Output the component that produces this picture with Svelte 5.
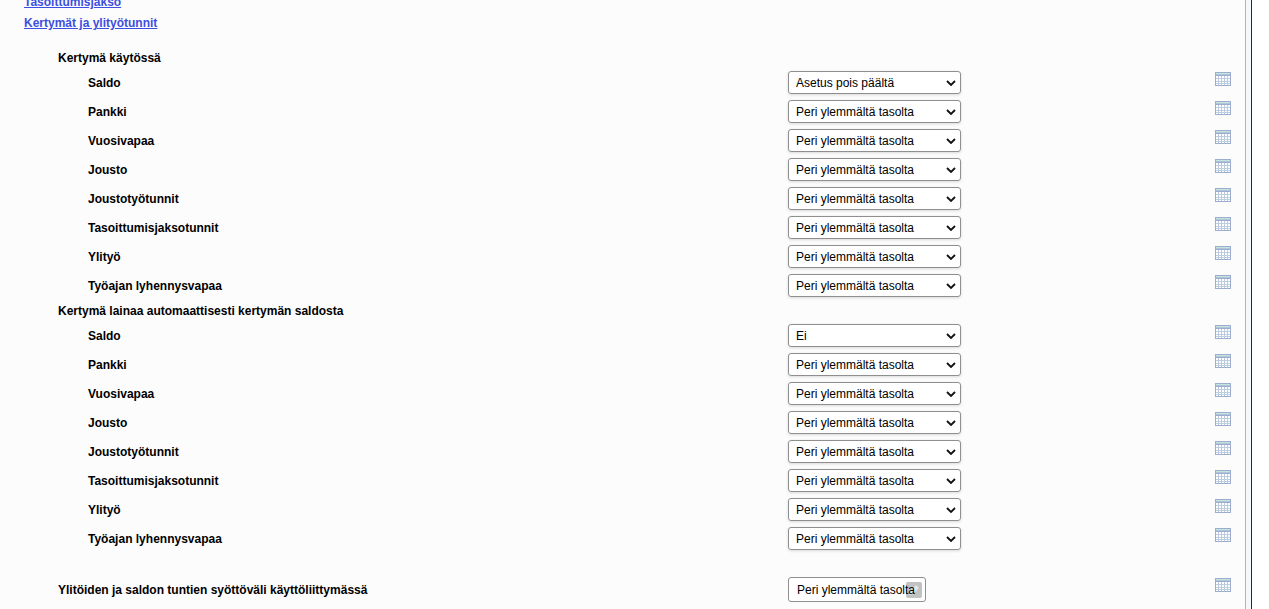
<script>
  const inherit = "Peri ylemmältä tasolta";
  const options = [inherit, "Asetus pois päältä", "Ei", "Kyllä"];
  const names = [
    "Saldo",
    "Pankki",
    "Vuosivapaa",
    "Jousto",
    "Joustotyötunnit",
    "Tasoittumisjaksotunnit",
    "Ylityö",
    "Työajan lyhennysvapaa"
  ];

  function makeRows(prefix, first) {
    return names.map((name, i) => ({
      id: `${prefix}-${i}`,
      name,
      value: i === 0 ? first : inherit
    }));
  }

  let groups = $state([
    { title: "Kertymä käytössä", rows: makeRows("kaytossa", "Asetus pois päältä") },
    { title: "Kertymä lainaa automaattisesti kertymän saldosta", rows: makeRows("lainaa", "Ei") }
  ]);
  let interval = $state(inherit);
</script>

{#snippet calendar()}
  <button class="calendar" type="button" aria-label="Kalenteri">
    <svg width="16" height="14" viewBox="0 0 16 14" shape-rendering="crispEdges">
      <rect width="16" height="14" fill="#9dadd0" />
      <rect x="1" y="1" width="14" height="1" fill="#c3e6d8" />
      <rect x="1" y="2" width="14" height="1" fill="#b0c4dc" />
      <rect x="1" y="4" width="14" height="9" fill="#ffffff" />
      <path d="M3.5 4v9M6.5 4v9M9.5 4v9M12.5 4v9" stroke="#bfc6e4" />
      <path d="M1 6.5h14M1 9.5h14M1 11.5h14" stroke="#bccfdd" />
    </svg>
  </button>
{/snippet}

<div class="page">
  <main>
    <nav>
      <a href="#tasoittumisjakso">Tasoittumisjakso</a>
      <a href="#kertymat">Kertymät ja ylityötunnit</a>
    </nav>

    {#each groups as group}
      <section>
        <h2>{group.title}</h2>
        {#each group.rows as row}
          <div class="row">
            <label for={row.id}>{row.name}</label>
            <div class="field">
              <select id={row.id} bind:value={row.value}>
                {#each options as option}
                  <option>{option}</option>
                {/each}
              </select>
              <svg class="arrow" width="10" height="6" viewBox="0 0 10 6">
                <path d="M1 1l4 4 4-4" fill="none" stroke="#111" stroke-width="1.8" />
              </svg>
            </div>
            {@render calendar()}
          </div>
        {/each}
      </section>
    {/each}

    <div class="row last">
      <label for="interval">Ylitöiden ja saldon tuntien syöttöväli käyttöliittymässä</label>
      <div class="field">
        <svg class="pencil" width="16" height="16" viewBox="0 0 16 16">
          <rect width="16" height="16" rx="2" fill="#c2c2c2" />
          <path d="M3 13l1-4 6-6 3 3-6 6z" fill="#e6e6e6" />
        </svg>
        <input id="interval" type="text" bind:value={interval} />
      </div>
      {@render calendar()}
    </div>
  </main>
</div>

<style>
  :global(body) {
    background: #fff;
    overflow: hidden;
  }

  .page {
    display: flex;
    box-sizing: border-box;
    min-height: 100vh;
    margin-right: 17px;
    padding-right: 5px;
    border-right: 1px solid #003366;
    background: #f6f9fc;
    color: #000;
    font: bold 12px/21px "Liberation Sans", Arial, sans-serif;
  }

  main {
    flex: 1;
    border-right: 1px solid #b4b4b8;
    background: #fcfcfc;
  }

  nav {
    display: flex;
    flex-direction: column;
    align-items: flex-start;
    margin: -8px 0 13px 24px;
  }

  nav a {
    color: #3c4fe0;
  }

  h2 {
    height: 21px;
    margin: 0 0 0 58px;
    font-size: 12px;
    line-height: 23px;
  }

  .row {
    display: grid;
    grid-template-columns: minmax(0, 1fr) 427px 30px;
    align-items: center;
    height: 29px;
  }

  label {
    padding: 2px 0 0 88px;
  }

  .field {
    position: relative;
    justify-self: start;
    display: flex;
    border-radius: 3px;
    background: #fff;
  }

  select,
  input {
    box-sizing: border-box;
    margin: 0;
    border: 1px solid #8f8f8f;
    border-radius: 3px;
    background: transparent;
    color: #000;
    font: 12px "Liberation Sans", Arial, sans-serif;
  }

  select {
    appearance: none;
    width: 173px;
    height: 23px;
    padding: 0 20px 0 7px;
    box-shadow: 0 1px 3px rgba(0, 0, 0, 0.14);
  }

  input {
    position: relative;
    width: 138px;
    height: 25px;
    padding: 0 6px 0 8px;
  }

  .arrow {
    position: absolute;
    top: 9px;
    right: 5px;
    pointer-events: none;
  }

  .pencil {
    position: absolute;
    top: 5px;
    right: 4px;
  }

  .calendar {
    align-self: start;
    margin: 4px 0 0;
    padding: 0;
    border: 0;
    background: none;
    width: 16px;
    height: 14px;
    cursor: pointer;
  }

  .calendar svg {
    display: block;
  }

  .last {
    height: 31px;
    margin-top: 21px;
  }

  .last label {
    padding-left: 58px;
  }
</style>
